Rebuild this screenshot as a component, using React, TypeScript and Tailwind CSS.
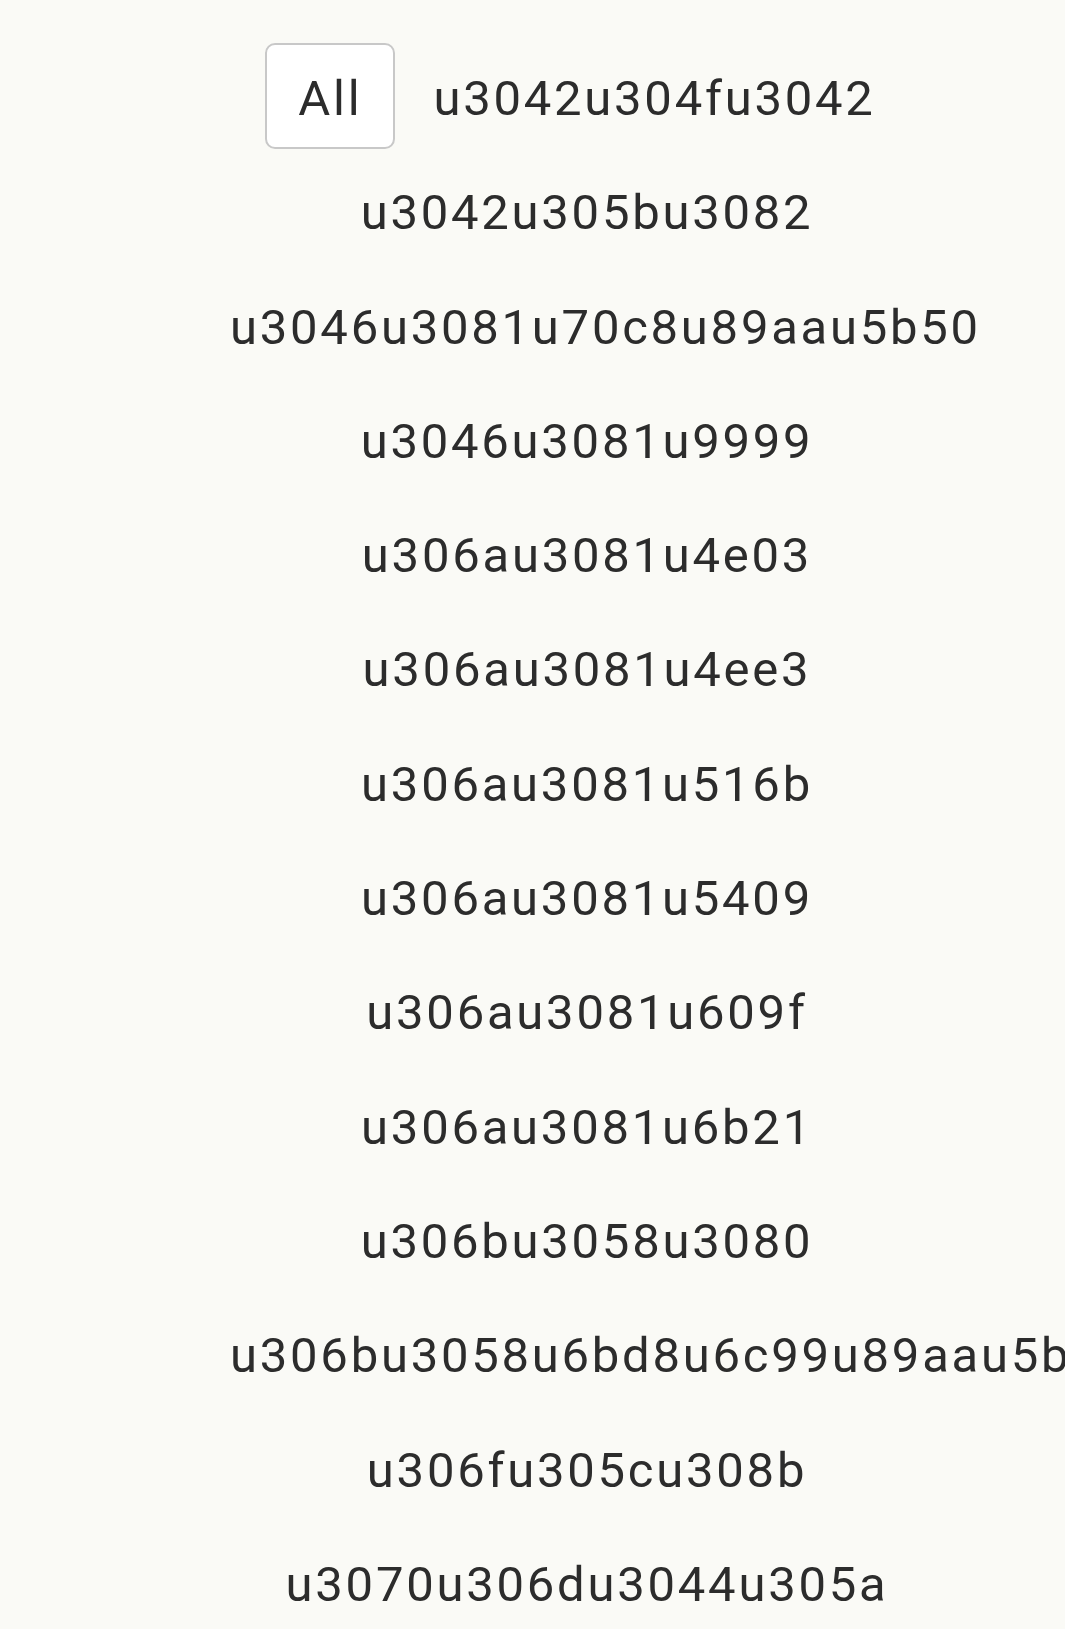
import React from "react";

const tags = [
  "u3042u304fu3042",
  "u3042u305bu3082",
  "u3046u3081u70c8u89aau5b50",
  "u3046u3081u9999",
  "u306au3081u4e03",
  "u306au3081u4ee3",
  "u306au3081u516b",
  "u306au3081u5409",
  "u306au3081u609f",
  "u306au3081u6b21",
  "u306bu3058u3080",
  "u306bu3058u6bd8u6c99u89aau5b50",
  "u306fu305cu308b",
  "u3070u306du3044u305a",
];

export default function App() {
  const [active, setActive] = React.useState("All");

  return (
    <div className="min-h-[1629px] w-full overflow-hidden bg-[#fafaf6] pt-[43px] font-['Roboto',sans-serif]">
      <div className="ml-[197px] flex w-[780px] flex-wrap justify-center gap-x-[5px] gap-y-[8.3px]">
        {["All", ...tags].map((tag) => (
          <button
            key={tag}
            onClick={() => setActive(tag)}
            className={
              "max-w-full whitespace-nowrap rounded-[10px] border-2 px-[31px] pt-[26px] pb-[20px] text-center text-[49px] leading-[56px] tracking-[2.75px] text-[#2c2c2c] " +
              (active === tag ? "border-[#c8c8c8] bg-white" : "border-transparent bg-transparent")
            }
          >
            {tag}
          </button>
        ))}
      </div>
    </div>
  );
}
